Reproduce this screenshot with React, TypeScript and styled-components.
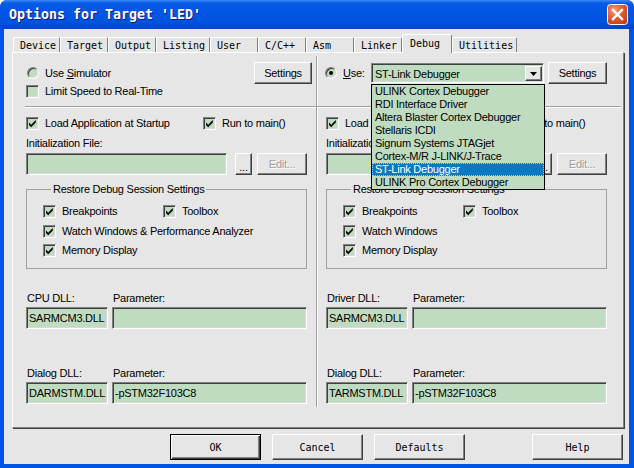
import React from "react";
import styled, { createGlobalStyle } from "styled-components";

const GREEN = "#c0dcc0";
const FACE = "#e6e6e6";

const GlobalStyle = createGlobalStyle`
  html, body { margin: 0; padding: 0; background: #fff; }
  body {
    font-family: "Liberation Sans", Arial, sans-serif;
    font-size: 11px;
    letter-spacing: -0.25px;
    color: #000;
  }
`;

const Window = styled.div`
  width: 634px;
  height: 468px;
  background: #0054e3;
  border-radius: 7px 7px 0 0;
  display: flex;
  flex-direction: column;
  overflow: hidden;
`;

const TitleBar = styled.div`
  height: 29px;
  flex: none;
  display: flex;
  align-items: center;
  justify-content: space-between;
  padding: 0 6px 0 9px;
  background: linear-gradient(to bottom, #3c8cf5 0px, #0a5ae8 3px, #0056e6 10px, #0052e0 22px, #0044c8 29px);
`;

const Title = styled.div`
  font: bold 13.3px "DejaVu Sans Mono", "Liberation Mono", monospace;
  letter-spacing: 0;
  color: #fff;
  text-shadow: 1px 1px 0 #0a2080;
  white-space: pre;
`;

const Client = styled.div`
  flex: 1;
  margin: 0 5px 4px 4px;
  background: ${FACE};
  display: flex;
  flex-direction: column;
`;

const TabStrip = styled.div`
  margin-top: 5px;
  padding-left: 9px;
  height: 18px;
  display: flex;
  align-items: flex-end;
`;

const Tab = styled.div<{ $width: number; $active?: boolean }>`
  box-sizing: border-box;
  width: ${p => p.$width}px;
  height: ${p => (p.$active ? 19 : 15)}px;
  padding: ${p => (p.$active ? "2px 0 0 7px" : "1px 0 0 6px")};
  margin-bottom: ${p => (p.$active ? -1 : 0)}px;
  font: 10px "DejaVu Sans Mono", "Liberation Mono", monospace;
  letter-spacing: 0;
  line-height: 13px;
  background: ${FACE};
  border-top: 1px solid #fff;
  border-left: 1px solid #fff;
  border-right: 1px solid #808080;
  border-radius: 2px 2px 0 0;
  position: relative;
  z-index: ${p => (p.$active ? 2 : 0)};
  white-space: pre;
`;

const Panel = styled.div`
  margin-left: 8px;
  width: 612px;
  height: 376px;
  box-sizing: border-box;
  border: 1px solid;
  border-color: #fff #808080 #808080 #fff;
  box-shadow: 1px 1px 0 #404040;
  padding: 3px 0 0 13px;
  display: grid;
  grid-template-columns: 291px 1fr;
  align-items: start;
`;

const Column = styled.div<{ $side: "left" | "right" }>`
  width: 281px;
  display: flex;
  flex-direction: column;
  padding: 6px 0 3px;
  ${p =>
    p.$side === "left"
      ? "padding-right: 9px; border-right: 1px solid #a0a0a0; box-shadow: 1px 0 0 #fff;"
      : "padding-left: 9px;"}
`;

const Row = styled.div<{ $h?: number; $mt?: number }>`
  display: flex;
  align-items: center;
  height: ${p => p.$h ?? 14}px;
  margin-top: ${p => p.$mt ?? 0}px;
  white-space: nowrap;
`;

const PairRow = styled(Row)<{ $first: number }>`
  display: grid;
  grid-template-columns: ${p => p.$first}px auto;
`;

const Separator = styled.div<{ $side: "left" | "right" }>`
  margin-top: 8px;
  border-top: 1px solid #a0a0a0;
  border-bottom: 1px solid #fff;
  margin-left: ${p => (p.$side === "left" ? -1 : -9)}px;
  margin-right: ${p => (p.$side === "left" ? -9 : -14)}px;
`;

const CheckLabel = styled.label`
  display: flex;
  align-items: center;
  gap: 6px;
  white-space: nowrap;
`;

const Box = styled.span`
  box-sizing: border-box;
  width: 13px;
  height: 13px;
  flex: none;
  background: ${GREEN};
  border: 1px solid;
  border-color: #808080 #fff #fff #808080;
  box-shadow: inset 1px 1px 0 #404040, inset -1px -1px 0 #d8d8d8;
  display: flex;
  align-items: center;
  justify-content: center;
`;

const RadioDot = styled.span<{ $on?: boolean; $shift?: number }>`
  box-sizing: border-box;
  width: 12px;
  height: 12px;
  flex: none;
  margin-left: ${p => p.$shift ?? 0}px;
  border-radius: 50%;
  background: ${GREEN};
  border: 1px solid;
  border-color: #808080 #fff #fff #808080;
  box-shadow: inset 1px 1px 0 #404040, inset -1px -1px 0 #d8d8d8;
  display: flex;
  align-items: center;
  justify-content: center;
  &::after {
    content: "";
    display: ${p => (p.$on ? "block" : "none")};
    width: 4px;
    height: 4px;
    border-radius: 50%;
    background: #000;
  }
`;

const RadioText = styled.span`
  margin-left: 6px;
`;

const Button = styled.button<{ $w: number; $disabled?: boolean; $push?: number }>`
  box-sizing: border-box;
  width: ${p => p.$w}px;
  height: 22px;
  flex: none;
  padding: 0;
  ${p => (p.$push !== undefined ? `margin-left: auto; margin-right: ${p.$push}px;` : "")}
  background: ${FACE};
  border: 1px solid;
  border-color: #fff #404040 #404040 #fff;
  box-shadow: inset -1px -1px 0 #808080;
  font: 11px "Liberation Sans", Arial, sans-serif;
  letter-spacing: -0.25px;
  color: ${p => (p.$disabled ? "#a0a0a0" : "#000")};
  text-shadow: ${p => (p.$disabled ? "1px 1px 0 #fff" : "none")};
  white-space: nowrap;
`;

const DotsButton = styled(Button)`
  line-height: 26px;
`;

const EditButton = styled(Button)`
  margin-left: -3px;
`;

const Field = styled.div<{ $w?: number }>`
  box-sizing: border-box;
  height: 22px;
  ${p => (p.$w ? `width: ${p.$w}px; flex: none;` : "")}
  background: ${GREEN};
  border: 1px solid;
  border-color: #808080 #fff #fff #808080;
  box-shadow: inset 1px 1px 0 #404040, inset -1px -1px 0 #d8d8d8;
  padding-left: 2px;
  line-height: 20px;
  white-space: nowrap;
  overflow: hidden;
`;

const FieldRow = styled.div<{ $mt: number }>`
  display: flex;
  margin-top: ${p => p.$mt}px;
  height: 22px;
  gap: 8px;
`;

const Group = styled.fieldset`
  margin: 7px 0 0;
  padding: 0 0 11px 16px;
  min-inline-size: 0;
  width: 281px;
  box-sizing: border-box;
  border: 1px solid #a0a0a0;
`;

const Legend = styled.legend`
  margin-left: 8px;
  padding: 0 2px;
  line-height: 14px;
  height: 14px;
`;

const DllGrid = styled.div<{ $mt: number }>`
  display: grid;
  grid-template-columns: 82px 195px;
  column-gap: 4px;
  margin-top: ${p => p.$mt}px;
`;

const DllLabel = styled.div`
  height: 14px;
  line-height: 14px;
  padding-left: 1px;
  margin-bottom: 2px;
  white-space: nowrap;
`;

const Combo = styled.div`
  position: relative;
  box-sizing: border-box;
  width: 173px;
  height: 20px;
  margin-left: auto;
  margin-right: 4px;
  background: ${GREEN};
  border: 1px solid;
  border-color: #808080 #fff #fff #808080;
  box-shadow: inset 1px 1px 0 #404040, inset -1px -1px 0 #d8d8d8;
  display: flex;
  align-items: stretch;
  padding: 2px 1px 1px 3px;
`;

const ComboText = styled.div`
  flex: 1;
  line-height: 16px;
  white-space: nowrap;
`;

const ArrowButton = styled.div`
  box-sizing: border-box;
  width: 17px;
  background: ${FACE};
  border: 1px solid;
  border-color: #fff #404040 #404040 #fff;
  box-shadow: inset -1px -1px 0 #808080;
  display: flex;
  align-items: center;
  justify-content: center;
`;

const DropList = styled.ul`
  position: absolute;
  top: 20px;
  left: -1px;
  z-index: 5;
  width: 174px;
  box-sizing: border-box;
  margin: 0;
  padding: 0;
  list-style: none;
  background: ${GREEN};
  border: 1px solid #000;
`;

const DropItem = styled.li<{ $selected?: boolean }>`
  height: 13px;
  line-height: 13px;
  padding-left: 3px;
  white-space: nowrap;
  background: ${p => (p.$selected ? "#0a79bf" : "transparent")};
  color: ${p => (p.$selected ? "#fff" : "#000")};
  outline: ${p => (p.$selected ? "1px dotted #f0c060" : "none")};
  outline-offset: -1px;
`;

const ButtonBar = styled.div`
  margin-top: 6px;
  height: 26px;
  display: flex;
  gap: 11px;
  padding-left: 166px;
  padding-right: 6px;
`;

const DialogButton = styled.button<{ $default?: boolean; $push?: boolean }>`
  box-sizing: border-box;
  width: 91px;
  height: 26px;
  padding: 0;
  margin-left: ${p => (p.$push ? "auto" : "0")};
  background: ${FACE};
  font: 10px "DejaVu Sans Mono", "Liberation Mono", monospace;
  color: #000;
  border: 1px solid;
  ${p =>
    p.$default
      ? "border-color: #000; box-shadow: inset 1px 1px 0 #fff, inset -1px -1px 0 #404040, inset -2px -2px 0 #808080;"
      : "border-color: #fff #404040 #404040 #fff; box-shadow: inset -1px -1px 0 #808080;"}
`;

const CheckMark = () => (
  <svg width="9" height="9" viewBox="0 0 9 9">
    <polygon points="1,3.5 3.2,5.7 7.8,1.1 7.8,3.6 3.2,8.2 1,6" fill="#000" />
  </svg>
);

const Check = ({ label, checked }: { label: React.ReactNode; checked?: boolean }) => (
  <CheckLabel>
    <Box>{checked && <CheckMark />}</Box>
    <span>{label}</span>
  </CheckLabel>
);

const CloseIcon = () => (
  <svg width="21" height="21" viewBox="0 0 21 21">
    <defs>
      <radialGradient id="cg" cx="35%" cy="30%" r="80%">
        <stop offset="0" stopColor="#f4a37e" />
        <stop offset="0.45" stopColor="#e2623a" />
        <stop offset="1" stopColor="#c23b12" />
      </radialGradient>
    </defs>
    <rect x="0.5" y="0.5" width="20" height="20" rx="3" fill="url(#cg)" stroke="#fff" />
    <path d="M6 6 L15 15 M15 6 L6 15" stroke="#fff" strokeWidth="2.4" strokeLinecap="square" />
  </svg>
);

const tabs = [
  { label: "Device", width: 47 },
  { label: "Target", width: 48 },
  { label: "Output", width: 48 },
  { label: "Listing", width: 54 },
  { label: "User", width: 48 },
  { label: "C/C++", width: 48 },
  { label: "Asm", width: 48 },
  { label: "Linker", width: 48 },
  { label: "Debug", width: 50, active: true },
  { label: "Utilities", width: 65 },
];

const drivers = [
  "ULINK Cortex Debugger",
  "RDI Interface Driver",
  "Altera Blaster Cortex Debugger",
  "Stellaris ICDI",
  "Signum Systems JTAGjet",
  "Cortex-M/R J-LINK/J-Trace",
  "ST-Link Debugger",
  "ULINK Pro Cortex Debugger",
];

interface SideProps {
  side: "left" | "right";
}

const DebugColumn = ({ side }: SideProps) => {
  const left = side === "left";
  return (
    <Column $side={side}>
      {left ? (
        <Row $h={22}>
          <RadioDot $shift={1} />
          <RadioText>
            Use <u>S</u>imulator
          </RadioText>
          <Button $w={58} $push={-5}>Settings</Button>
        </Row>
      ) : (
        <Row $h={22}>
          <RadioDot $on $shift={-1} />
          <RadioText>
            <u>U</u>se:
          </RadioText>
          <Combo>
            <ComboText>ST-Link Debugger</ComboText>
            <ArrowButton>
              <svg width="7" height="4" viewBox="0 0 7 4">
                <polygon points="0,0 7,0 3.5,4" fill="#000" />
              </svg>
            </ArrowButton>
            <DropList>
              {drivers.map(d => (
                <DropItem key={d} $selected={d === "ST-Link Debugger"}>
                  {d}
                </DropItem>
              ))}
            </DropList>
          </Combo>
          <Button $w={59}>Settings</Button>
        </Row>
      )}
      <Row>{left && <Check label="Limit Speed to Real-Time" />}</Row>
      <Separator $side={side} />
      <PairRow $mt={8} $first={177}>
        <Check label="Load Application at Startup" checked />
        <Check label="Run to main()" checked />
      </PairRow>
      <Row $mt={6}>Initialization File:</Row>
      <FieldRow $mt={3}>
        <Field $w={201} />
        <DotsButton $w={17}>...</DotsButton>
        <EditButton $w={50} $disabled>Edit...</EditButton>
      </FieldRow>
      <Group>
        <Legend>Restore Debug Session Settings</Legend>
        <PairRow $mt={8} $first={120}>
          <Check label="Breakpoints" checked />
          <Check label="Toolbox" checked />
        </PairRow>
        <Row $mt={6}>
          <Check label={left ? "Watch Windows & Performance Analyzer" : "Watch Windows"} checked />
        </Row>
        <Row $mt={5}>
          <Check label="Memory Display" checked />
        </Row>
      </Group>
      <DllGrid $mt={22}>
        <DllLabel>{left ? "CPU DLL:" : "Driver DLL:"}</DllLabel>
        <DllLabel>Parameter:</DllLabel>
        <Field>SARMCM3.DLL</Field>
        <Field />
      </DllGrid>
      <DllGrid $mt={37}>
        <DllLabel>Dialog DLL:</DllLabel>
        <DllLabel>Parameter:</DllLabel>
        <Field>{left ? "DARMSTM.DLL" : "TARMSTM.DLL"}</Field>
        <Field>-pSTM32F103C8</Field>
      </DllGrid>
    </Column>
  );
};

export default function App() {
  return (
    <>
      <GlobalStyle />
      <Window>
        <TitleBar>
          <Title>Options for Target 'LED'</Title>
          <CloseIcon />
        </TitleBar>
        <Client>
          <TabStrip>
            {tabs.map(t => (
              <Tab key={t.label} $width={t.width} $active={t.active}>
                {t.label}
              </Tab>
            ))}
          </TabStrip>
          <Panel>
            <DebugColumn side="left" />
            <DebugColumn side="right" />
          </Panel>
          <ButtonBar>
            <DialogButton $default>OK</DialogButton>
            <DialogButton>Cancel</DialogButton>
            <DialogButton>Defaults</DialogButton>
            <DialogButton $push>Help</DialogButton>
          </ButtonBar>
        </Client>
      </Window>
    </>
  );
}
